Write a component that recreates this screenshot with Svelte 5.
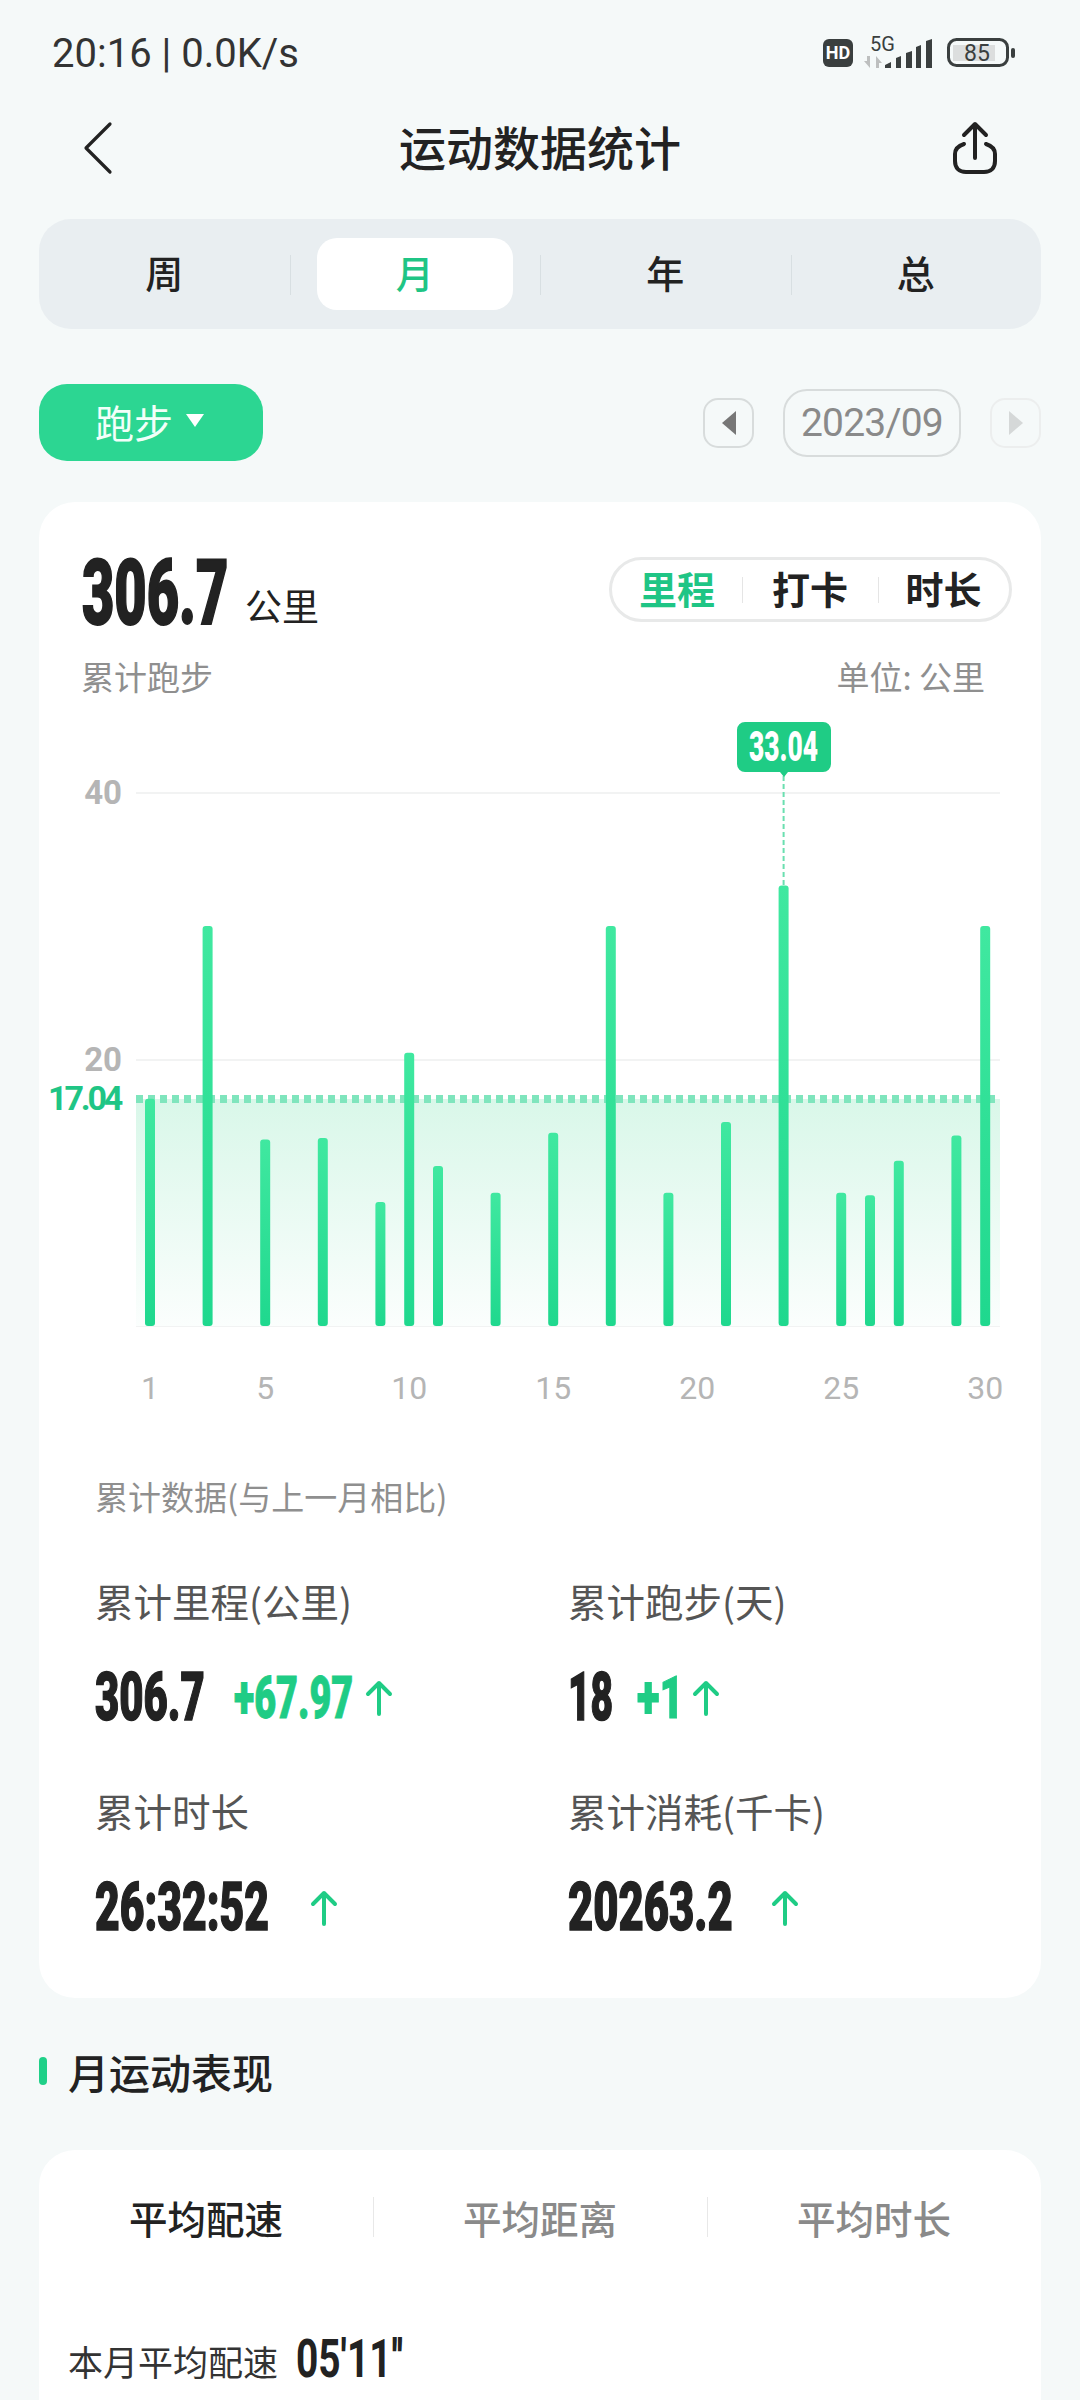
<script>
	const days = [
		[1, 17.04], [3, 30], [5, 14], [7, 14.1], [9, 9.3], [10, 20.5], [11, 12], [13, 10],
		[15, 14.5], [17, 30], [19, 10], [21, 15.3], [23, 33.04], [25, 10], [26, 9.8], [27, 12.4],
		[29, 14.3], [30, 30]
	];
	const ticks = [1, 5, 10, 15, 20, 25, 30];
	const tabs = ['周', '月', '年', '总'];
	const modes = ['里程', '打卡', '时长'];
	const perf = ['平均配速', '平均距离', '平均时长'];
	const stats = [
		{ label: '累计里程(公里)', value: '306.7', delta: '+67.97', w: 110, sx: 0.625, dw: 121, dsx: 0.63 },
		{ label: '累计跑步(天)', value: '18', delta: '+1', w: 40, sx: 0.58, dw: 45, dsx: 0.7 },
		{ label: '累计时长', value: '26:32:52', delta: '', w: 173, sx: 0.637, dw: 3, dsx: 1 },
		{ label: '累计消耗(千卡)', value: '20263.2', delta: '', w: 161, sx: 0.65, dw: 3, dsx: 1 }
	];

	// chart coordinates are relative to the card, y starts at 210 in the card
	const barX = (d) => 111 + 28.8 * (d - 1);
	const valY = (v) => 616 - v * 13.33;
</script>

<div class="page">
	<div class="status">
		<span class="clock">20:16 | 0.0K/s</span>
		<svg class="status-icons" width="200" height="40" viewBox="820 34 200 40">
			<rect x="823" y="40" width="30" height="28" rx="6" fill="#3a3f3f" />
			<text x="838" y="60" class="hd" text-anchor="middle">HD</text>
			<text x="870" y="52" class="net">5G</text>
			<path d="M870 57v12l-6-7h3v-5zM876 69V57l6 7h-3v5z" fill="#bdbfbf" />
			<path d="M885 69v-3l6-3v6zM896 69v-10l5-2v12zM906 69v-15l6-2v17zM916 69v-21l5-2v23zM926 69v-27l6-2v29z" fill="#3a3f3f" />
			<rect x="948.5" y="40.5" width="59" height="26" rx="8" fill="none" stroke="#3a3f3f" stroke-width="3" />
			<rect x="953" y="46" width="42" height="16" fill="#dcdede" />
			<rect x="1011" y="49" width="4" height="10" rx="2" fill="#3a3f3f" />
			<text x="977" y="62" class="batt" text-anchor="middle">85</text>
		</svg>
	</div>

	<div class="nav">
		<svg width="46" height="54" viewBox="0 0 46 54" fill="none">
			<path d="M27 3L3 27l24 24" stroke="#222" stroke-width="3.2" stroke-linecap="round" stroke-linejoin="round" />
		</svg>
		<span class="title">运动数据统计</span>
		<svg width="46" height="54" viewBox="952 121 46 54" fill="none" stroke="#222" stroke-width="4" stroke-linecap="round" stroke-linejoin="round">
			<path d="M976 158v-33M965 135l11-11 11 11" />
			<path d="M965 144c-6 2-9 5-9 10v7c0 7 4 11 11 11h18c7 0 11-4 11-11v-7c0-5-3-8-9-10" />
		</svg>
	</div>

	<div class="range-tabs">
		{#each tabs as tab, i}
			<div class="range-tab" class:on={i === 1} class:line={i > 0}><span>{tab}</span></div>
		{/each}
	</div>

	<div class="filter">
		<div class="sport">跑步<i class="caret"></i></div>
		<div class="date-nav">
			<div class="step"><i class="tri left"></i></div>
			<div class="date">2023/09</div>
			<div class="step off"><i class="tri right"></i></div>
		</div>
	</div>

	<section class="card total">
		<div class="head">
			<div class="sum">
				<span class="cond big">306.7</span>
				<span class="unit">公里</span>
			</div>
			<div class="modes">
				{#each modes as m, i}
					<span class="mode" class:on={i === 0}>{m}</span>
				{/each}
			</div>
		</div>
		<div class="sub"><span>累计跑步</span><span>单位: 公里</span></div>

		<svg class="chart" width="1002" height="710" viewBox="0 210 1002 710">
			<defs>
				<linearGradient id="area" x1="0" y1="0" x2="0" y2="1">
					<stop offset="0" stop-color="#d9f7e9" />
					<stop offset="1" stop-color="#fbfefd" />
				</linearGradient>
				<linearGradient id="bar" x1="0" y1="0" x2="0" y2="1">
					<stop offset="0" stop-color="#40e8a0" />
					<stop offset="1" stop-color="#1fd88e" />
				</linearGradient>
			</defs>
			<line x1="97" x2="961" y1="293" y2="293" class="grid" />
			<line x1="97" x2="961" y1="560" y2="560" class="grid" />
			<line x1="97" x2="961" y1="826" y2="826" class="grid" />
			<rect x="97" y="599" width="864" height="227" fill="url(#area)" />
			<line x1="97" x2="961" y1="599" y2="599" class="avg" />
			<line x1="744.6" x2="744.6" y1="276" y2="386" class="guide" />
			{#each days as [d, v]}
				<rect x={barX(d) - 5} y={valY(v) + 210} width="10" height={826 - valY(v) - 210} rx="3" fill="url(#bar)" />
			{/each}
			<text x="83" y="304" class="axis strong" text-anchor="end">40</text>
			<text x="83" y="571" class="axis strong" text-anchor="end">20</text>
			<text x="81" y="610" class="axis-avg" text-anchor="end">17.04</text>
			{#each ticks as t}
				<text x={barX(t)} y="899" class="axis" text-anchor="middle">{t}</text>
			{/each}
			<path d="M706 222h78a8 8 0 0 1 8 8v34a8 8 0 0 1-8 8h-35l-4 5-4-5h-35a8 8 0 0 1-8-8v-34a8 8 0 0 1 8-8z" fill="#1fcc85" />
			<text x="710" y="261" class="tip" textLength="69" lengthAdjust="spacingAndGlyphs">33.04</text>
		</svg>

		<div class="stats">
			<div class="stats-title">累计数据(与上一月相比)</div>
			<div class="stats-grid">
				{#each stats as s}
					<div class="stat">
						<div class="stat-label">{s.label}</div>
						<div class="stat-row">
							<span class="cond val" style="width:{s.w}px;transform:scaleX({s.sx})">{s.value}</span>
							<span class="cond delta" style="width:{s.dw}px;transform:scaleX({s.dsx})">{s.delta}</span>
							<svg width="28" height="36" viewBox="0 0 28 36" fill="none" stroke="#1fcc85" stroke-width="4" stroke-linecap="round" stroke-linejoin="round">
								<path d="M14 34V3M3 14L14 3l11 11" />
							</svg>
						</div>
					</div>
				{/each}
			</div>
		</div>
	</section>

	<div class="section-title"><i></i>月运动表现</div>

	<section class="card perf">
		<div class="perf-tabs">
			{#each perf as p, i}
				<div class="perf-tab" class:on={i === 0} class:line={i > 0}>{p}</div>
			{/each}
		</div>
		<div class="pace">
			<span>本月平均配速</span>
			<span class="cond pace-val">05'11''</span>
		</div>
	</section>
</div>

<style>
	:global(body) {
		background: #f5f9f9;
		font-family: 'Noto Sans CJK SC', Roboto, sans-serif;
	}

	.page {
		height: 2400px;
		overflow: hidden;
		padding: 0 39px;
		box-sizing: border-box;
		color: #222;
		background: #f5f9f9;
	}

	.status {
		height: 106px;
		display: flex;
		align-items: center;
		justify-content: space-between;
		padding: 0 21px 0 13px;
	}

	.clock {
		font: 400 40px Roboto, sans-serif;
		color: #333;
	}

	.hd {
		font: 700 18px Roboto, sans-serif;
		fill: #fff;
	}

	.net {
		font: 400 20px Roboto, sans-serif;
		fill: #3a3f3f;
	}

	.batt {
		font: 400 23px Roboto, sans-serif;
		fill: #3a3f3f;
	}

	.nav {
		height: 84px;
		display: flex;
		align-items: center;
		justify-content: space-between;
		padding: 0 44px;
	}

	.title {
		font-size: 47px;
		font-weight: 500;
		padding-bottom: 5px;
	}

	.range-tabs {
		margin-top: 29px;
		height: 110px;
		display: grid;
		grid-template-columns: repeat(4, 1fr);
		background: #e9eef1;
		border-radius: 32px;
	}

	.range-tab {
		position: relative;
		display: flex;
		align-items: center;
		justify-content: center;
		font-size: 38px;
		font-weight: 500;
	}

	.range-tab span {
		width: 196px;
		height: 72px;
		line-height: 67px;
		text-align: center;
		border-radius: 20px;
	}

	.range-tab.on span {
		background: #fff;
		color: #1fc585;
	}

	.range-tab.line::before {
		content: '';
		position: absolute;
		left: 0;
		top: 36px;
		height: 40px;
		width: 1px;
		background: #d8dfe2;
	}

	.filter {
		margin-top: 55px;
		height: 77px;
		display: flex;
		align-items: center;
		justify-content: space-between;
	}

	.sport {
		width: 224px;
		height: 77px;
		box-sizing: border-box;
		padding: 0 0 4px 56px;
		display: flex;
		align-items: center;
		background: #2cd692;
		border-radius: 28px;
		color: #f2fff9;
		font-size: 39px;
	}

	.caret {
		margin-left: 13px;
		border: 9px solid transparent;
		border-top: 13px solid #fff;
		border-bottom: 0;
	}

	.date-nav {
		display: flex;
		align-items: center;
		gap: 29px;
	}

	.step {
		width: 51px;
		height: 50px;
		box-sizing: border-box;
		border: 2px solid #d8dcdc;
		border-radius: 15px;
		display: flex;
		align-items: center;
		justify-content: center;
	}

	.step.off {
		border-color: #eceeee;
	}

	.tri {
		border-top: 12px solid transparent;
		border-bottom: 12px solid transparent;
	}

	.tri.left {
		border-right: 14px solid #777;
	}

	.tri.right {
		border-left: 14px solid #d5d8d8;
	}

	.date {
		width: 178px;
		height: 68px;
		box-sizing: border-box;
		border: 2px solid #d8dcdc;
		border-radius: 24px;
		font: 400 39px/64px Roboto, sans-serif;
		letter-spacing: -0.8px;
		text-align: center;
		color: #8a8a8a;
	}

	.card {
		background: #fff;
		border-radius: 36px;
	}

	.total {
		margin-top: 41px;
		height: 1496px;
		padding-top: 55px;
		box-sizing: border-box;
	}

	.head {
		height: 65px;
		display: flex;
		justify-content: space-between;
		padding: 0 29px 0 43px;
	}

	.sum {
		display: flex;
		align-items: flex-end;
	}

	.cond {
		display: inline-block;
		font-family: Roboto, sans-serif;
		font-weight: 900;
		white-space: nowrap;
		transform-origin: left center;
		transform: scaleX(0.62);
	}

	.big {
		width: 141px;
		font-size: 90px;
		line-height: 65px;
		color: #222;
		-webkit-text-stroke: 2px #222;
		transform: translateY(4px) scaleX(0.62);
	}

	.unit {
		margin-left: 22px;
		font-size: 37px;
		line-height: 42px;
		transform: translateY(4px);
	}

	.modes {
		width: 403px;
		box-sizing: border-box;
		display: grid;
		grid-template-columns: 130px 136px 1fr;
		border: 3px solid #e8e9e9;
		border-radius: 33px;
		align-items: center;
	}

	.mode {
		position: relative;
		text-align: center;
		font-size: 38px;
		font-weight: 700;
		line-height: 56px;
		padding-bottom: 3px;
	}

	.mode.on {
		color: #1fc585;
	}

	.mode + .mode::before {
		content: '';
		position: absolute;
		left: 0;
		top: 17px;
		height: 26px;
		width: 1px;
		background: #e5e5e5;
	}

	.sub {
		margin-top: 32px;
		display: flex;
		justify-content: space-between;
		padding: 0 56px 0 42px;
		font-size: 33px;
		line-height: 44px;
		color: #8f8f8f;
	}

	.chart {
		display: block;
		margin-top: 12px;
	}

	.grid {
		stroke: #f2f3f3;
		stroke-width: 2;
	}

	.avg {
		stroke: #7fe5bd;
		stroke-width: 8;
		stroke-dasharray: 7 5;
	}

	.guide {
		stroke: #6adfb0;
		stroke-width: 2;
		stroke-dasharray: 5 3;
	}

	.axis {
		font: 400 32px Roboto, sans-serif;
		fill: #b5b5b5;
	}

	.axis.strong {
		font-size: 33px;
		font-weight: 700;
	}

	.axis-avg {
		font: 700 34px Roboto, sans-serif;
		letter-spacing: -3.2px;
		fill: #1fc585;
	}

	.tip {
		font: 900 42px Roboto, sans-serif;
		fill: #fff;
	}

	.stats {
		padding: 0 56px;
	}

	.stats-title {
		margin-top: 54px;
		font-size: 33px;
		line-height: 44px;
		color: #8f8f8f;
	}

	.stats-grid {
		margin-top: 56px;
		display: grid;
		grid-template-columns: 473px 1fr;
		row-gap: 63px;
	}

	.stat-label {
		font-size: 38.5px;
		line-height: 52px;
		color: #555;
	}

	.stat-row {
		margin-top: 47px;
		height: 48px;
		display: flex;
		align-items: center;
		gap: 29px;
	}

	.stat-row svg {
		margin-left: -19px;
		transform: translateY(1px);
	}

	.val {
		font-size: 67px;
		color: #222;
		-webkit-text-stroke: 1.5px #222;
	}

	.delta {
		font-size: 60px;
		color: #1fcc85;
		-webkit-text-stroke: 1px #1fcc85;
	}

	.section-title {
		margin-top: 43px;
		display: flex;
		align-items: center;
		font-size: 41px;
		font-weight: 500;
		line-height: 60px;
	}

	.section-title i {
		width: 8px;
		height: 28px;
		margin-right: 21px;
		border-radius: 4px;
		background: #1fd088;
	}

	.perf {
		margin-top: 49px;
		height: 400px;
	}

	.perf-tabs {
		padding-top: 45px;
		display: grid;
		grid-template-columns: repeat(3, 1fr);
	}

	.perf-tab {
		position: relative;
		text-align: center;
		font-size: 38.5px;
		font-weight: 500;
		line-height: 44px;
		color: #8a8a8a;
	}

	.perf-tab.on {
		color: #222;
	}

	.perf-tab.line::before {
		content: '';
		position: absolute;
		left: 0;
		top: 2px;
		height: 40px;
		width: 1px;
		background: #e8e8e8;
	}

	.pace {
		margin-top: 98px;
		padding-left: 29px;
		display: flex;
		align-items: flex-end;
		font-size: 35px;
		line-height: 44px;
		color: #333;
	}

	.pace-val {
		margin: 0 0 2px 18px;
		font-size: 54px;
		font-weight: 700;
		line-height: 44px;
		color: #222;
		transform: scaleX(0.72);
	}
</style>
